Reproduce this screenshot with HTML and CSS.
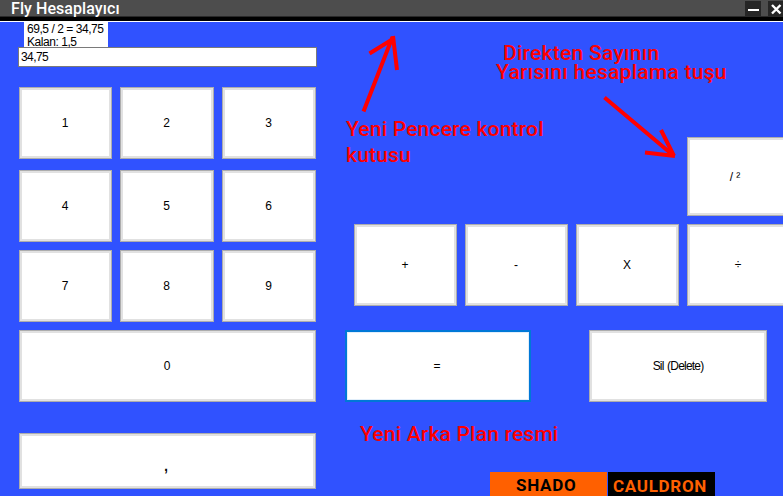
FILE: index.html
```html
<!DOCTYPE html>
<html lang="tr">
<head>
<meta charset="utf-8">
<title>Fly Hesaplayıcı</title>
<link rel="stylesheet" href="styles.css">
</head>
<body>
<div class="window">
  <header class="titlebar">
    <h1 class="title">Fly Hesaplayıcı</h1>
    <div class="controls">
      <span class="control"><svg width="16" height="15" viewBox="0 0 16 15"><path d="M3 9H14" stroke="#fff" stroke-width="2"/></svg></span>
      <span class="control close"><svg width="15" height="15" viewBox="0 0 15 15"><path d="M4 4L12.500 12.500M12.500 4L4 12.500" stroke="#fff" stroke-width="2.4"/></svg></span>
    </div>
  </header>
  <main class="body">
    <section class="left">
      <div class="result"><span class="calc">69,5 / 2 = 34,75</span><br><span class="rest">Kalan: 1,5</span></div>
      <div class="display"><span>34,75</span></div>
      <div class="keys">
        <button class="key">1</button><button class="key">2</button><button class="key">3</button>
        <button class="key">4</button><button class="key">5</button><button class="key">6</button>
        <button class="key">7</button><button class="key">8</button><button class="key">9</button>
        <button class="key wide">0</button>
        <button class="key wide comma">,</button>
      </div>
    </section>
    <section class="right">
      <button class="key half">/ ²</button>
      <div class="ops">
        <button class="key">+</button><button class="key">-</button><button class="key">X</button><button class="key">÷</button>
      </div>
      <div class="actions">
        <button class="key equals">=</button>
        <button class="key delete">Sil (Delete)</button>
      </div>
      <footer class="brand"><span class="shado">SHADO</span><span class="cauldron">CAULDRON</span></footer>
    </section>
  </main>
  <p class="note note-box">Yeni Pencere kontrol<br>kutusu</p>
  <p class="note note-half"><span class="first">Direkten Sayının</span><span class="second">Yarısını hesaplama tuşu</span></p>
  <p class="note note-bg">Yeni Arka Plan resmi</p>
  <svg class="arrows" width="783" height="496" viewBox="0 0 783 496">
    <path d="M363.500 111.500L392.500 37M369.500 53.500L393 39M397 70L393 36"/>
    <path d="M604.500 97.500L674 156M661 130L674 156M645 152.500L675 156"/>
  </svg>
</div>
</body>
</html>
```

FILE: styles.css
```css
* { box-sizing: border-box; }
body { margin: 0; overflow: hidden; }
.window {
  position: relative;
  width: 783px;
  height: 496px;
  overflow: hidden;
  background: #3052ff;
  font: 12px/13px "Liberation Sans", sans-serif;
  color: #000;
}
.titlebar {
  display: flex;
  justify-content: space-between;
  height: 22px;
  padding-left: 11px;
  background: linear-gradient(#4d4d4d 16px, #292929 16px, #292929 17px, #000 17px, #000 21px, #fff 21px);
}
.title {
  margin: 0;
  font: 500 16px/17px Roboto, sans-serif;
  letter-spacing: 0.07px;
  color: #fff;
}
.controls { display: flex; gap: 7px; padding-top: 1px; }
.control { width: 16px; height: 15px; background: #262626; }
.control.close { width: 15px; }
.control svg { display: block; }
.body { display: flex; height: 474px; }
.left { width: 345px; flex: none; padding-left: 18px; }
.result {
  width: 84px;
  height: 25px;
  margin-left: 6px;
  padding: 1px 0 0 3px;
  background: #fff;
  line-height: 12.5px;
  white-space: nowrap;
  letter-spacing: -0.45px;
}
.display {
  width: 299px;
  height: 20px;
  border: 1px solid #7a7a7a;
  background: #fff;
  padding: 3px 2px;
  letter-spacing: -0.6px;
}
.keys {
  display: grid;
  grid-template-columns: 93px 94px 94px;
  grid-template-rows: 75px 72px 72px 95px 56px;
  gap: 8px;
  margin: 20px 0 0 1px;
}
.key {
  height: 72px;
  margin: 0;
  padding: 0 1px 0 0;
  border: 1px solid #adadad;
  box-shadow: inset 0 0 0 2px #e1e1e1;
  background: #fff;
  font: 12px/14px "Liberation Sans", sans-serif;
  color: #000;
}
.wide { grid-column: 1 / -1; }
.comma { height: 56px; padding: 6px 3px 0 0; font-size: 20px; }
.right { display: flex; flex-direction: column; width: 438px; }
.half { flex: none; width: 103px; height: 79px; margin: 115px 0 0 342px; padding-right: 7px; }
.ops { display: flex; gap: 8px; margin: 8px 0 0 9px; }
.ops .key { flex: none; width: 103px; height: 82px; }
.actions { display: flex; gap: 58px; margin-top: 24px; }
.equals { width: 186px; padding-right: 2px; border: 2px solid #0078d7; box-shadow: inset 0 0 0 1px #e1eefa; }
.delete { width: 178px; padding: 0; letter-spacing: -0.8px; word-spacing: 1px; }
.brand {
  display: flex;
  gap: 1px;
  height: 24px;
  margin: 70px 0 0 145px;
  font: 700 17px/26px Roboto, sans-serif;
  letter-spacing: 0.7px;
}
.shado { width: 117px; padding-left: 26px; background: #ff6000; }
.cauldron { width: 107px; padding-left: 5px; line-height: 28px; background: #000; color: #ff6000; }
.note {
  position: absolute;
  margin: 0;
  font: 500 21px/26px Roboto, sans-serif;
  letter-spacing: 0.2px;
  color: #f00;
  white-space: nowrap;
}
.note-box { left: 346px; top: 116px; }
.note-half { left: 496px; top: 44px; line-height: 19px; letter-spacing: 0.27px; }
.note-half span { display: block; }
.note-half .first { margin-left: 7px; }
.note-bg { left: 360px; top: 421px; }
.arrows {
  position: absolute;
  left: 0;
  top: 0;
  fill: none;
  stroke: #f00;
  stroke-width: 4;
  pointer-events: none;
}
```
